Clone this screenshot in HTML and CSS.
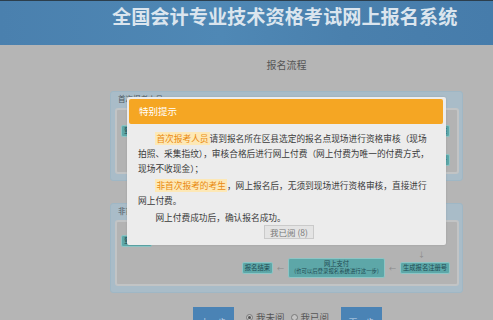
FILE: index.html
```html
<!DOCTYPE html>
<html lang="zh-CN">
<head>
<meta charset="utf-8">
<title>全国会计专业技术资格考试网上报名系统</title>
<link rel="stylesheet" href="styles.css">
</head>
<body>
<header class="top">
  <h1 class="site-title">全国会计专业技术资格考试网上报名系统</h1>
</header>
<main class="main">
  <h2 class="flow-title">报名流程</h2>
  <section class="panel">
    <div class="panel-head">首次报考人员</div>
    <div class="panel-body body-first">
      <div class="row row-spread">
        <span class="step">登录系统</span>
        <span class="step">资格审核</span>
      </div>
      <div class="row row-end">
        <span class="step">生成报名注册号</span>
      </div>
    </div>
  </section>
  <section class="panel">
    <div class="panel-head">非首次报考人员</div>
    <div class="panel-body body-second">
      <div class="row">
        <span class="step">登录系统</span>
      </div>
      <div class="down">↓</div>
      <div class="row row-end row-last">
        <span class="step">报名结束</span>
        <span class="arrow">←</span>
        <span class="step step-big"><span class="big-main">网上支付</span><span class="big-sub">(也可以后登录报名系统进行这一步)</span></span>
        <span class="arrow">←</span>
        <span class="step step-reg">生成报名注册号</span>
      </div>
    </div>
  </section>
  <div class="actions">
    <button class="btn">上一步</button>
    <label class="radio"><span class="dot checked"></span>我未阅</label>
    <label class="radio"><span class="dot"></span>我已阅</label>
    <button class="btn">下一步</button>
  </div>
</main>

<div class="modal">
  <div class="modal-head">特别提示</div>
  <div class="modal-body">
    <p class="para"><span class="hl">首次报考人员</span>请到报名所在区县选定的报名点现场进行资格审核（现场<br>拍照、采集指纹），审核合格后进行网上付费（网上付费为唯一的付费方式，<br>现场不收现金）；</p>
    <p class="para"><span class="hl">非首次报考的考生</span>，网上报名后，无须到现场进行资格审核，直接进行<br>网上付费。</p>
    <p class="para">网上付费成功后，确认报名成功。</p>
    <div class="modal-foot"><button class="read-btn">我已阅 (8)</button></div>
  </div>
</div>
</body>
</html>
```
FILE: styles.css
```css
* { box-sizing: border-box; }
html, body { margin: 0; padding: 0; }
body {
  width: 493px;
  height: 320px;
  overflow: hidden;
  background: #b5b5b5;
  font-family: "Noto Sans CJK SC", "Noto Sans", sans-serif;
  position: relative;
}
.top {
  height: 45px;
  border-top: 1px solid #2c3e4c;
  background: linear-gradient(90deg, #4a80ae 0%, #4f88b5 45%, #4a80ad 70%, #467cab 100%);
  padding-left: 112px;
}
.site-title {
  margin: 0;
  padding-top: 3px;
  font-size: 19.2px;
  line-height: 24px;
  font-weight: 700;
  color: #dbe5ee;
  white-space: nowrap;
}
.main {
  margin-left: 110px;
  width: 353px;
}
.flow-title {
  margin: 13px 0 0;
  text-align: center;
  font-size: 10px;
  line-height: 14px;
  font-weight: 400;
  color: #555;
}
.panel {
  margin-top: 19px;
  border: 1px solid #9fb7c5;
  border-radius: 3px;
  background: #a9bcc8;
  padding: 0 3px 6px 4px;
}
.panel + .panel { margin-top: 22px; }
.panel-head {
  height: 16px;
  line-height: 14px;
  padding-left: 3px;
  font-size: 7.5px;
  color: #4d5a63;
}
.panel-body {
  height: 66px;
  border: 2px solid #c2c4c5;
  border-radius: 3px;
  background: #b3b3b3;
  padding: 0 7px 0 4px;
  display: flex;
  flex-direction: column;
}
.body-first { padding-top: 15px; }
.body-second { padding-top: 13px; }
.row {
  display: flex;
  align-items: center;
  gap: 4px;
}
.row-spread { justify-content: space-between; }
.row-end { justify-content: flex-end; }
.body-first .row-end { margin-top: 17px; }
.step {
  display: inline-block;
  background: #5da7a8;
  border: 1px solid #8ec5c5;
  border-radius: 2px;
  padding: 1px 2px;
  font-size: 6.3px;
  line-height: 8px;
  color: #1f4a52;
  white-space: nowrap;
}
.arrow {
  font-size: 7px;
  color: #8a8a8a;
  line-height: 8px;
}
.down {
  align-self: flex-end;
  margin-right: 25px;
  font-size: 7px;
  line-height: 9px;
  color: #8a8a8a;
  margin-top: 3px;
}
.row-last { margin-top: -1px; }
.step-big {
  width: 97px;
  display: flex;
  flex-direction: column;
  align-items: center;
  padding: 1px 1px 2px;
}
.big-main { font-size: 6.3px; line-height: 7.5px; }
.big-sub { font-size: 5.4px; line-height: 7px; }
.step-reg { width: 50px; text-align: center; }
.actions {
  margin-top: 14px;
  display: flex;
  justify-content: center;
  align-items: flex-start;
  gap: 12px;
  padding-left: 2px;
}
.btn {
  width: 41px;
  height: 22px;
  border: 0;
  background: #4a83b5;
  color: #c4d7e8;
  font-family: inherit;
  font-size: 8.5px;
  line-height: 12px;
  padding: 6px 0 0;
}
.radio {
  display: inline-flex;
  align-items: center;
  gap: 3px;
  font-size: 9.5px;
  line-height: 12px;
  color: #555;
  margin-top: 4px;
}
.radio + .radio { margin-left: -6px; }
.dot {
  width: 7px;
  height: 7px;
  border: 1px solid #7a7a7a;
  border-radius: 50%;
  background: #c4c4c4;
  position: relative;
}
.dot.checked::after {
  content: "";
  position: absolute;
  left: 1px;
  top: 1px;
  width: 3px;
  height: 3px;
  border-radius: 50%;
  background: #555;
}
.modal {
  position: absolute;
  left: 127px;
  top: 97px;
  width: 319px;
  height: 148px;
  background: #ececec;
  border-radius: 2px;
  padding: 2px 3px 2px 2px;
  box-shadow: 0 0 2px rgba(0,0,0,0.15);
}
.modal-head {
  height: 25px;
  background: #f5a623;
  border-radius: 2px;
  color: #fff;
  font-size: 9.5px;
  line-height: 25px;
  padding-left: 10px;
}
.modal-body {
  padding: 7px 0 0 9px;
}
.para {
  margin: 0 0 2px;
  font-size: 8.7px;
  line-height: 15px;
  color: #3a3a3a;
  text-indent: 2em;
  white-space: nowrap;
}
.para:last-of-type { margin-bottom: 0; }
.hl {
  color: #e98a10;
  background: #fde8b6;
  padding: 0 1px;
}
.modal-foot {
  display: flex;
  justify-content: center;
  padding-right: 3px;
}
.read-btn {
  width: 50px;
  height: 14px;
  padding: 0;
  border: 1px solid #cacaca;
  background: #e4e4e4;
  color: #777;
  font-family: inherit;
  font-size: 8.5px;
  line-height: 12px;
}
```
